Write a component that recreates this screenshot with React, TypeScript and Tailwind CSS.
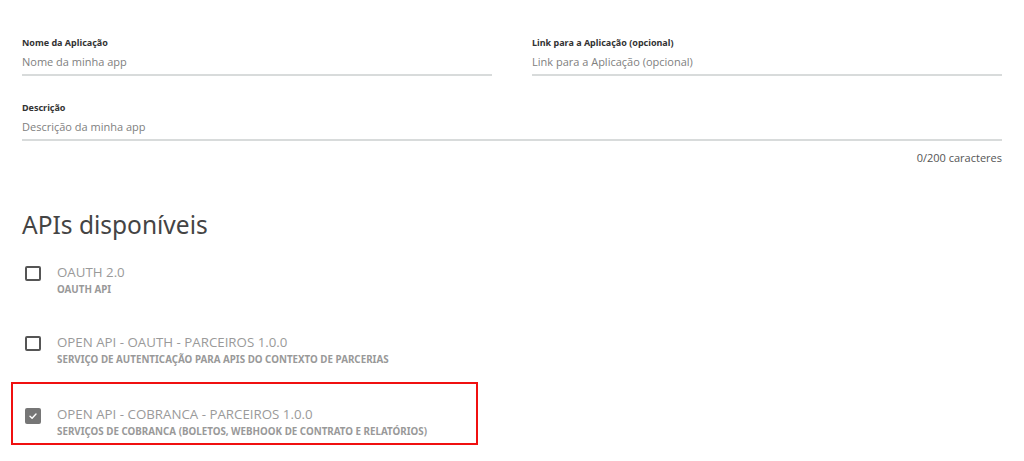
import React from 'react';

interface Api {
  name: string;
  description: string;
  checked: boolean;
}

const apis: Api[] = [
  { name: 'OAUTH 2.0', description: 'OAUTH API', checked: false },
  {
    name: 'OPEN API - OAUTH - PARCEIROS 1.0.0',
    description: 'SERVIÇO DE AUTENTICAÇÃO PARA APIS DO CONTEXTO DE PARCERIAS',
    checked: false,
  },
  {
    name: 'OPEN API - COBRANCA - PARCEIROS 1.0.0',
    description: 'SERVIÇOS DE COBRANCA (BOLETOS, WEBHOOK DE CONTRATO E RELATÓRIOS)',
    checked: true,
  },
];

const Field: React.FC<{ label: string; placeholder: string }> = ({ label, placeholder }) => (
  <label className="flex flex-col">
    <span className="text-[9px] font-bold text-[#333] leading-[12px] font-['Noto_Sans',sans-serif]">{label}</span>
    <input
      className="mt-[5px] h-[22px] border-b-2 border-[#d8dbdb] pb-[6px] text-[11px] text-[#555] placeholder:text-[#808080] outline-none bg-transparent"
      placeholder={placeholder}
    />
  </label>
);

const Checkbox: React.FC<{ checked: boolean }> = ({ checked }) =>
  checked ? (
    <div className="w-[16px] h-[16px] rounded-[2px] bg-[#767676] flex items-center justify-center">
      <svg width="10" height="10" viewBox="0 0 10 10" fill="none">
        <path d="M2 5.2 L4.1 7.2 L8 3" stroke="#fff" strokeWidth="1.4" strokeLinecap="round" strokeLinejoin="round" />
      </svg>
    </div>
  ) : (
    <div className="w-[16px] h-[15px] rounded-[2px] border-2 border-[#555]" />
  );

const ApiItem: React.FC<{ api: Api }> = ({ api }) => (
  <div className="flex items-start">
    <div className="pl-[3px] pt-[3px] w-[35px]">
      <Checkbox checked={api.checked} />
    </div>
    <div className="flex flex-col">
      <span className="text-[13.3px] text-[#9a9a9a] leading-[18px]">{api.name}</span>
      <span className="mt-[3px] text-[9.8px] font-bold text-[#999] leading-[11px] font-['Noto_Sans',sans-serif]">
        {api.description}
      </span>
    </div>
  </div>
);

const App: React.FC = () => {
  return (
    <div className="w-[1024px] h-[461px] bg-white overflow-hidden font-['Open_Sans',sans-serif]">
      <div className="px-[22px] pt-[37px]">
        <div className="grid grid-cols-2 gap-[40px]">
          <Field label="Nome da Aplicação" placeholder="Nome da minha app" />
          <Field label="Link para a Aplicação (opcional)" placeholder="Link para a Aplicação (opcional)" />
        </div>
        <div className="mt-[26px]">
          <Field label="Descrição" placeholder="Descrição da minha app" />
          <div className="mt-[10px] text-right text-[11px] text-[#555] leading-[13px]">0/200 caracteres</div>
        </div>
        <h2 className="mt-[46px] text-[24.5px] text-[#444] leading-[30px] font-['Noto_Sans',sans-serif]">
          APIs disponíveis
        </h2>
        <div className="mt-[23px] flex flex-col">
          <ApiItem api={apis[0]} />
          <div className="mt-[38px]">
            <ApiItem api={apis[1]} />
          </div>
          <div className="mt-[17px] -ml-[11px] w-[467px] h-[63px] border-2 border-[#f01010] pl-[9px] pt-[21px]">
            <ApiItem api={apis[2]} />
          </div>
        </div>
      </div>
    </div>
  );
};

export default App;
